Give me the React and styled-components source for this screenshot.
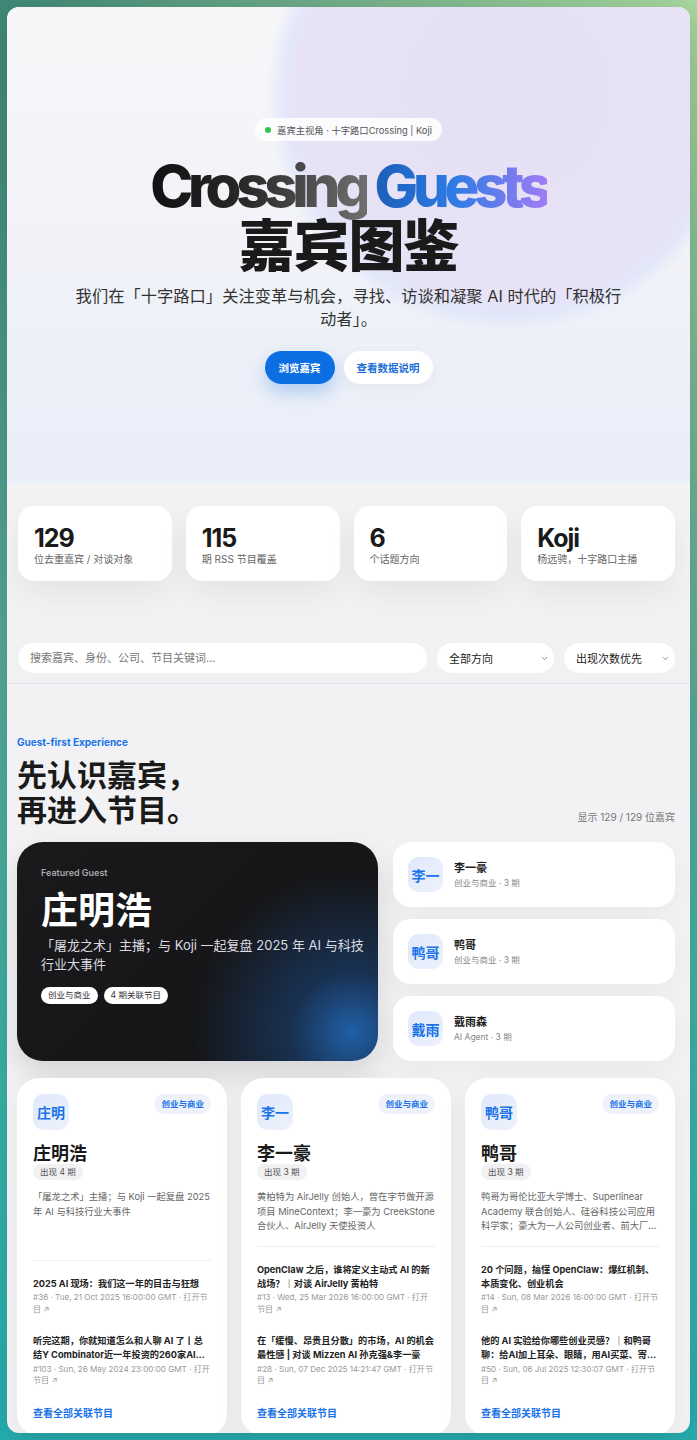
import styled, { createGlobalStyle } from "styled-components";
import { ChevronDown } from "lucide-react";

const stats = [
  { value: "129", label: "位去重嘉宾 / 对谈对象" },
  { value: "115", label: "期 RSS 节目覆盖" },
  { value: "6", label: "个话题方向" },
  { value: "Koji", label: "杨远骋，十字路口主播" },
];

const spotlight = [
  { short: "李一", name: "李一豪", sub: "创业与商业 · 3 期" },
  { short: "鸭哥", name: "鸭哥", sub: "创业与商业 · 3 期" },
  { short: "戴雨", name: "戴雨森", sub: "AI Agent · 3 期" },
];

const guests = [
  {
    short: "庄明",
    name: "庄明浩",
    count: 4,
    tag: "创业与商业",
    desc: "「屠龙之术」主播；与 Koji 一起复盘 2025 年 AI 与科技行业大事件",
    episodes: [
      { title: "2025 AI 现场：我们这一年的目击与狂想", meta: "#36 · Tue, 21 Oct 2025 16:00:00 GMT · 打开节目 ↗" },
      { title: "听完这期，你就知道怎么和人聊 AI 了丨总结Y Combinator近一年投资的260家AI公司", meta: "#103 · Sun, 26 May 2024 23:00:00 GMT · 打开节目 ↗" },
    ],
  },
  {
    short: "李一",
    name: "李一豪",
    count: 3,
    tag: "创业与商业",
    desc: "黄柏特为 AirJelly 创始人，曾在字节做开源项目 MineContext；李一豪为 CreekStone 合伙人、AirJelly 天使投资人",
    episodes: [
      { title: "OpenClaw 之后，谁将定义主动式 AI 的新战场？｜对谈 AirJelly 黄柏特", meta: "#13 · Wed, 25 Mar 2026 16:00:00 GMT · 打开节目 ↗" },
      { title: "在「缓慢、昂贵且分散」的市场，AI 的机会最性感 | 对谈 Mizzen AI 孙克强&李一豪", meta: "#28 · Sun, 07 Dec 2025 14:21:47 GMT · 打开节目 ↗" },
    ],
  },
  {
    short: "鸭哥",
    name: "鸭哥",
    count: 3,
    tag: "创业与商业",
    desc: "鸭哥为哥伦比亚大学博士、Superlinear Academy 联合创始人、硅谷科技公司应用科学家；豪大为一人公司创业者、前大厂产品经理",
    episodes: [
      { title: "20 个问题，搞懂 OpenClaw：爆红机制、本质变化、创业机会", meta: "#14 · Sun, 08 Mar 2026 16:00:00 GMT · 打开节目 ↗" },
      { title: "他的 AI 实验给你哪些创业灵感？｜和鸭哥聊：给AI加上耳朵、眼睛，用AI买菜、寄快递", meta: "#50 · Sun, 06 Jul 2025 12:30:07 GMT · 打开节目 ↗" },
    ],
  },
];

function App() {
  return (
    <>
      <GlobalStyle />
      <Window>
        <Hero>
          <Pill>
            <Dot />
            嘉宾主视角 · 十字路口Crossing | Koji
          </Pill>
          <Title>
            <Latin>
              <Dark>Crossing</Dark> <Bright>Guests</Bright>
            </Latin>
            <Han>嘉宾图鉴</Han>
          </Title>
          <Lead>我们在「十字路口」关注变革与机会，寻找、访谈和凝聚 AI 时代的「积极行动者」。</Lead>
          <Actions>
            <Button $primary>浏览嘉宾</Button>
            <Button>查看数据说明</Button>
          </Actions>
        </Hero>

        <Overview>
          <StatGrid>
            {stats.map((s) => (
              <StatCard key={s.value}>
                <StatValue>{s.value}</StatValue>
                <StatLabel>{s.label}</StatLabel>
              </StatCard>
            ))}
          </StatGrid>
          <Toolbar>
            <Search placeholder="搜索嘉宾、身份、公司、节目关键词..." />
            <Select>
              全部方向
              <ChevronDown size={9} strokeWidth={2} />
            </Select>
            <Select>
              出现次数优先
              <ChevronDown size={9} strokeWidth={2} />
            </Select>
          </Toolbar>
        </Overview>

        <Main>
          <HeadRow>
            <div>
              <Eyebrow>Guest-first Experience</Eyebrow>
              <Heading>
                先认识嘉宾，
                <br />
                再进入节目。
              </Heading>
            </div>
            <Count>显示 129 / 129 位嘉宾</Count>
          </HeadRow>

          <FeatureRow>
            <Featured>
              <FeaturedKicker>Featured Guest</FeaturedKicker>
              <FeaturedName>庄明浩</FeaturedName>
              <FeaturedDesc>「屠龙之术」主播；与 Koji 一起复盘 2025 年 AI 与科技行业大事件</FeaturedDesc>
              <ChipRow>
                <Chip>创业与商业</Chip>
                <Chip>4 期关联节目</Chip>
              </ChipRow>
            </Featured>
            <SideList>
              {spotlight.map((g) => (
                <MiniCard key={g.name}>
                  <Avatar $size={35}>{g.short}</Avatar>
                  <div>
                    <MiniName>{g.name}</MiniName>
                    <MiniSub>{g.sub}</MiniSub>
                  </div>
                </MiniCard>
              ))}
            </SideList>
          </FeatureRow>

          <CardGrid>
            {guests.map((g) => (
              <GuestCard key={g.name}>
                <CardTop>
                  <Avatar $size={36}>{g.short}</Avatar>
                  <Tag>{g.tag}</Tag>
                </CardTop>
                <GuestName>{g.name}</GuestName>
                <Appear>出现 {g.count} 期</Appear>
                <GuestDesc>{g.desc}</GuestDesc>
                <Episodes>
                  {g.episodes.map((e) => (
                    <div key={e.meta}>
                      <EpTitle>{e.title}</EpTitle>
                      <EpMeta>{e.meta}</EpMeta>
                    </div>
                  ))}
                  <MoreLink>查看全部关联节目</MoreLink>
                </Episodes>
              </GuestCard>
            ))}
          </CardGrid>
        </Main>
      </Window>
    </>
  );
}

const GlobalStyle = createGlobalStyle`
  * { box-sizing: border-box; }
  html, body { margin: 0; }
  body {
    min-height: 1440px;
    font-family: Inter, "Noto Sans CJK SC", sans-serif;
    color: #1d1d1f;
    background:
      radial-gradient(circle at 100% 0%, #a9da9f 0, rgba(169, 218, 159, 0) 45%),
      linear-gradient(180deg, #3c8676 0%, #58ab98 45%, #3bb5a8 75%, #27b1b3 100%);
  }
`;

const Window = styled.div`
  margin: 7px;
  height: 1426px;
  overflow: hidden;
  border-radius: 12px;
  background: #f2f2f4;
  box-shadow: 0 10px 40px rgba(0, 0, 0, 0.18);
`;

const Hero = styled.header`
  display: flex;
  flex-direction: column;
  align-items: center;
  height: 476px;
  padding-top: 111px;
  text-align: center;
  background:
    radial-gradient(circle at 500px 85px, #e6e0f5 0, #e7e2f6 208px, rgba(222, 228, 250, 0.75) 224px, rgba(236, 238, 250, 0) 240px),
    linear-gradient(180deg, #f7f7f9 0%, #f2f3f8 45%, #e9eef9 100%);
`;

const Pill = styled.div`
  display: inline-flex;
  align-items: center;
  gap: 6px;
  height: 23px;
  padding: 0 10px;
  border-radius: 12px;
  background: rgba(255, 255, 255, 0.85);
  font-size: 9.3px;
  color: #555;
`;

const Dot = styled.span`
  width: 6px;
  height: 6px;
  border-radius: 50%;
  background: #30c64a;
`;

const Title = styled.h1`
  margin: 18px 0 0;
  font-weight: 800;
`;

const Latin = styled.span`
  display: block;
  font-size: 58px;
  line-height: 55px;
  letter-spacing: -0.09em;
`;

const Dark = styled.span`
  background: linear-gradient(90deg, #111 0%, #2a2a2a 45%, #707070 100%);
  -webkit-background-clip: text;
  background-clip: text;
  color: transparent;
`;

const Bright = styled.span`
  background: linear-gradient(90deg, #1b5fb8 0%, #2d7be4 45%, #a07cf5 100%);
  -webkit-background-clip: text;
  background-clip: text;
  color: transparent;
`;

const Han = styled.span`
  display: block;
  font-family: "Noto Sans CJK SC", sans-serif;
  font-size: 56px;
  line-height: 56px;
  letter-spacing: -0.02em;
  color: #1a1a1a;
`;

const Lead = styled.p`
  margin: 15px 0 0;
  max-width: 556px;
  font-size: 16.3px;
  line-height: 23px;
  color: #333;
`;

const Actions = styled.div`
  display: flex;
  gap: 9px;
  margin-top: 20px;
`;

const Button = styled.button`
  height: 33px;
  padding: 0 ${(p) => (p.$primary ? "14px" : "13px")};
  border: 0;
  border-radius: 17px;
  font-family: inherit;
  font-size: 10.5px;
  font-weight: 700;
  color: ${(p) => (p.$primary ? "#fff" : "#1d6fd8")};
  background: ${(p) => (p.$primary ? "#0b6ee3" : "#fff")};
  box-shadow: ${(p) => (p.$primary ? "0 8px 18px rgba(11, 110, 227, 0.28)" : "0 4px 14px rgba(0, 0, 0, 0.04)")};
`;

const Overview = styled.section`
  padding: 23px 15px 10px 11px;
  border-bottom: 1px solid #e4e4e8;
  background: linear-gradient(180deg, #f3f3f5 0%, #f1f1f3 100%);
`;

const StatGrid = styled.div`
  display: grid;
  grid-template-columns: repeat(4, 1fr);
  gap: 14px;
`;

const StatCard = styled.div`
  height: 75px;
  padding: 18px 16px 0;
  border-radius: 16px;
  background: #fff;
  box-shadow: 0 12px 30px rgba(0, 0, 0, 0.06);
`;

const StatValue = styled.div`
  font-size: 25px;
  line-height: 28px;
  font-weight: 700;
  letter-spacing: -0.04em;
  color: #1a1a1a;
`;

const StatLabel = styled.div`
  font-size: 10px;
  line-height: 14px;
  color: #666;
`;

const Toolbar = styled.div`
  display: grid;
  grid-template-columns: 1fr 117px 111px;
  gap: 10px;
  margin-top: 62px;
`;

const Search = styled.input`
  height: 30px;
  padding: 0 12px;
  border: 0;
  border-radius: 15px;
  background: #fff;
  font-family: inherit;
  font-size: 11px;
  outline: none;
  &::placeholder { color: #777; }
`;

const Select = styled.div`
  display: flex;
  align-items: center;
  justify-content: space-between;
  height: 30px;
  padding: 0 5px 0 12px;
  border-radius: 15px;
  background: #fff;
  font-size: 11px;
  color: #222;
  svg { color: #666; }
`;

const Main = styled.main`
  padding: 51px 15px 0 10px;
`;

const HeadRow = styled.div`
  display: flex;
  justify-content: space-between;
  align-items: flex-end;
`;

const Eyebrow = styled.div`
  font-size: 10px;
  line-height: 14px;
  font-weight: 700;
  color: #1a73e8;
`;

const Heading = styled.h2`
  margin: 7px 0 0;
  font-family: "Noto Sans CJK SC", sans-serif;
  font-size: 30px;
  line-height: 35px;
  font-weight: 700;
  color: #1a1a1a;
`;

const Count = styled.div`
  padding-bottom: 2px;
  font-size: 10px;
  line-height: 14px;
  color: #777;
`;

const FeatureRow = styled.div`
  display: grid;
  grid-template-columns: 361px 1fr;
  gap: 15px;
  margin-top: 16px;
`;

const Featured = styled.div`
  height: 219px;
  padding: 25px 10px 0 24px;
  border-radius: 26px;
  color: #fff;
  background:
    radial-gradient(circle at 335px 190px, rgba(34, 104, 184, 0.9) 0, rgba(28, 78, 140, 0.5) 60px, rgba(20, 30, 50, 0) 160px),
    linear-gradient(135deg, #1a1a1c 0%, #131315 100%);
  box-shadow: 0 14px 30px rgba(0, 0, 0, 0.12);
`;

const FeaturedKicker = styled.div`
  font-size: 9px;
  line-height: 12px;
  font-weight: 600;
  color: #a8a8ac;
`;

const FeaturedName = styled.div`
  margin-top: 8px;
  font-family: "Noto Sans CJK SC", sans-serif;
  font-size: 37px;
  line-height: 42px;
  font-weight: 700;
`;

const FeaturedDesc = styled.p`
  margin: 7px 0 0;
  font-size: 13px;
  line-height: 19px;
  color: #dcdce0;
`;

const ChipRow = styled.div`
  display: flex;
  gap: 6px;
  margin-top: 13px;
`;

const Chip = styled.span`
  height: 17px;
  padding: 0 7px;
  border-radius: 9px;
  background: #fff;
  font-size: 8.5px;
  line-height: 17px;
  color: #333;
`;

const SideList = styled.div`
  display: flex;
  flex-direction: column;
  gap: 12px;
`;

const MiniCard = styled.div`
  display: flex;
  align-items: center;
  gap: 11px;
  height: 65px;
  padding: 0 15px;
  border-radius: 18px;
  background: #fff;
  box-shadow: 0 8px 24px rgba(0, 0, 0, 0.04);
`;

const Avatar = styled.div`
  display: flex;
  align-items: center;
  justify-content: center;
  flex: none;
  width: ${(p) => p.$size}px;
  height: ${(p) => p.$size}px;
  border-radius: 11px;
  background: linear-gradient(135deg, #dfe9fb 0%, #edf1fb 100%);
  font-family: "Noto Sans CJK SC", sans-serif;
  font-size: 14px;
  font-weight: 700;
  color: #1a73e8;
`;

const MiniName = styled.div`
  font-size: 11px;
  line-height: 15px;
  font-weight: 700;
  color: #1f1f1f;
`;

const MiniSub = styled.div`
  margin-top: 1px;
  font-size: 8.5px;
  line-height: 12px;
  color: #888;
`;

const CardGrid = styled.div`
  display: grid;
  grid-template-columns: repeat(3, 1fr);
  gap: 14px;
  margin-top: 17px;
`;

const GuestCard = styled.article`
  display: flex;
  flex-direction: column;
  padding: 16px 16px 16px;
  border-radius: 22px;
  background: #fff;
  box-shadow: 0 10px 28px rgba(0, 0, 0, 0.05);
`;

const CardTop = styled.div`
  display: flex;
  justify-content: space-between;
  align-items: flex-start;
`;

const Tag = styled.span`
  height: 20px;
  padding: 0 7px;
  border-radius: 10px;
  background: #eef3fb;
  font-size: 8.5px;
  line-height: 20px;
  font-weight: 700;
  color: #1a73e8;
`;

const GuestName = styled.div`
  margin-top: 11px;
  font-family: "Noto Sans CJK SC", sans-serif;
  font-size: 18px;
  line-height: 22px;
  font-weight: 700;
  color: #1a1a1a;
`;

const Appear = styled.span`
  align-self: flex-start;
  margin-top: 1px;
  height: 16px;
  padding: 0 7px;
  border-radius: 8px;
  background: #f1f1f4;
  font-size: 8.5px;
  line-height: 16px;
  color: #555;
`;

const GuestDesc = styled.p`
  display: -webkit-box;
  -webkit-line-clamp: 3;
  -webkit-box-orient: vertical;
  overflow: hidden;
  margin: 10px 0 12px;
  font-size: 9.3px;
  line-height: 14.5px;
  color: #666;
`;

const Episodes = styled.div`
  display: flex;
  flex-direction: column;
  gap: 19px;
  margin-top: auto;
  padding-top: 16px;
  border-top: 1px solid #efeff2;
`;

const EpTitle = styled.div`
  display: -webkit-box;
  -webkit-line-clamp: 2;
  -webkit-box-orient: vertical;
  overflow: hidden;
  font-size: 9.2px;
  line-height: 14px;
  font-weight: 700;
  color: #222;
`;

const EpMeta = styled.div`
  margin-top: 1.5px;
  font-size: 8.1px;
  line-height: 11.5px;
  color: #999;
`;

const MoreLink = styled.div`
  font-size: 10px;
  line-height: 14px;
  font-weight: 700;
  color: #1a73e8;
`;

export default App;
